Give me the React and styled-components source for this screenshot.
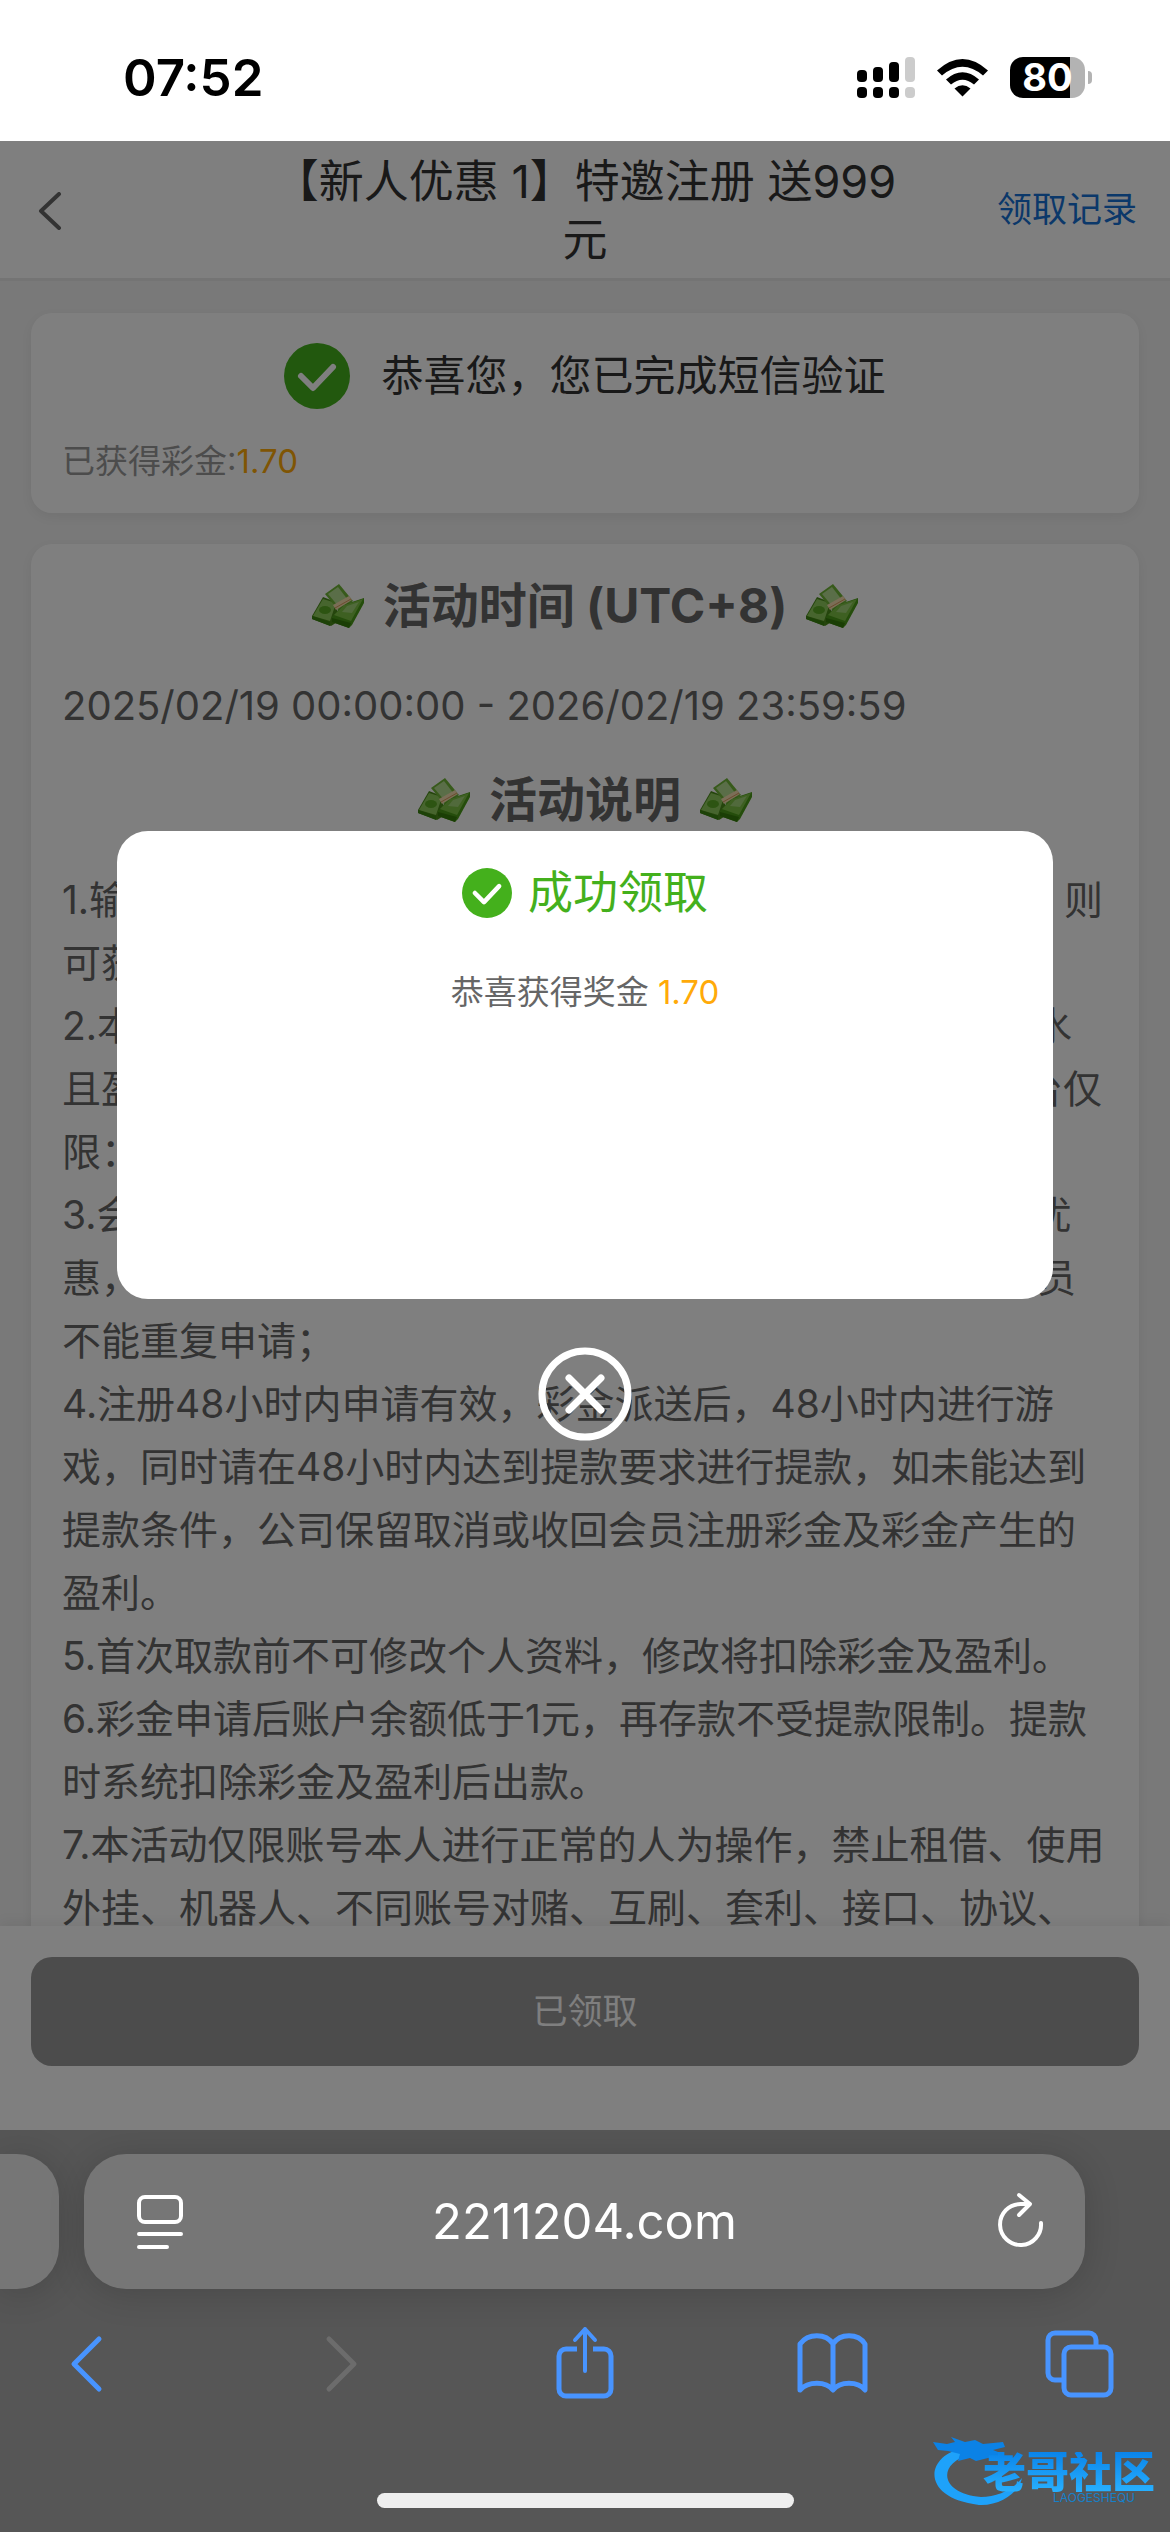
import React from 'react'
import styled, { createGlobalStyle } from 'styled-components'

const GlobalStyle = createGlobalStyle`
    *, *::before, *::after {
        box-sizing: border-box;
    }
    html, body, #root {
        height: 100%;
    }
    body {
        margin: 0;
        font-family: Inter, "Noto Sans CJK SC", sans-serif;
        color: #333;
    }
    h1, h2, p, ol {
        margin: 0;
        padding: 0;
        font-weight: 400;
    }
    button {
        border: 0;
        padding: 0;
        background: none;
        font-family: inherit;
        cursor: pointer;
    }
    svg {
        display: block;
        flex: none;
    }
`
const Screen = styled.div`
    position: relative;
    display: flex;
    flex-direction: column;
    min-height: 100%;
    overflow: hidden;
`

/* status bar */
const StatusBar = styled.header`
    display: flex;
    align-items: center;
    justify-content: space-between;
    padding: 50px 78px 36px 123px;
    background: #fff;
    color: #000;
`
const Clock = styled.time`
    font-size: 51px;
    line-height: 55px;
    font-weight: 600;
`
const StatusIcons = styled.div`
    display: flex;
    align-items: center;
    gap: 22px;
`
const Battery = styled.div`
    display: flex;
    align-items: center;
    gap: 3px;
`
const BatteryBody = styled.div`
    width: 75px;
    border-radius: 13px;
    background: linear-gradient(90deg, #000 80%, #b3b3b3 80%);
    color: #fff;
    font-size: 38px;
    line-height: 41px;
    font-weight: 700;
    text-align: center;
`
const BatteryTip = styled.div`
    width: 4px;
    height: 13px;
    border-radius: 0 4px 4px 0;
    background: #b3b3b3;
`

/* web page */
const WebPage = styled.main`
    position: relative;
    flex: 1 1 0;
    min-height: 0;
    display: flex;
    flex-direction: column;
    background: #f2f2f2;
    overflow: hidden;
`
const NavBar = styled.nav`
    display: grid;
    grid-template-columns: 1fr 58% 1fr;
    align-items: center;
    padding: 12px 33px 9px;
    border-bottom: 3px solid #e8e8e8;
    background: #fff;
`
const BackButton = styled.button`
    justify-self: start;
    color: #666;
    padding: 0 4px;
`
const NavTitle = styled.h1`
    font-size: 45px;
    line-height: 58px;
    text-align: center;
`
const RecordLink = styled.a`
    justify-self: end;
    padding-bottom: 4px;
    font-size: 35px;
    line-height: 44px;
    color: #1670d4;
    text-decoration: none;
    white-space: nowrap;
`
const Scroller = styled.div`
    flex: 1 1 0;
    min-height: 0;
    display: flex;
    flex-direction: column;
    gap: 31px;
    padding: 32px 31px 0;
    overflow: hidden;
`
const Card = styled.section`
    flex: none;
    padding: 30px 31px;
    border-radius: 21px;
    background: #fff;
    box-shadow: 0 4px 12px rgba(0, 0, 0, 0.06);
`
const Verified = styled.div`
    display: flex;
    align-items: center;
    justify-content: center;
    gap: 31px;
    font-size: 42px;
    line-height: 66px;
    margin-bottom: 30px;
`
const Bonus = styled.p`
    font-size: 33px;
    line-height: 44px;
    color: #999;
`
const Amount = styled.span`
    color: #ffaa09;
`
const Heading = styled.h2`
    display: flex;
    align-items: center;
    justify-content: center;
    gap: 18px;
    margin-bottom: 37px;
    font-size: 48px;
    line-height: 63px;
    font-weight: 700;
    color: #666;
`
const Period = styled.p`
    margin-bottom: 31px;
    font-size: 40px;
    line-height: 63px;
    color: #666;
`
const Rules = styled.ol`
    list-style: none;
    font-size: 39px;
    line-height: 63px;
    color: #666;
`
const Footer = styled.footer`
    padding: 31px 31px 64px;
    background: #fff;
    box-shadow: 0 -4px 12px rgba(0, 0, 0, 0.06);
`
const ClaimButton = styled.button`
    display: block;
    width: 100%;
    border-radius: 21px;
    background: #999;
    color: #fff;
    font-size: 35px;
    line-height: 109px;
`

/* dialog over the page */
const Overlay = styled.div`
    position: absolute;
    inset: 0;
    display: flex;
    flex-direction: column;
    align-items: center;
    justify-content: center;
    gap: 48px;
    background: rgba(0, 0, 0, 0.5);
`
const Dialog = styled.div`
    width: 80%;
    min-height: 468px;
    padding: 29px 31px;
    border-radius: 31px;
    background: #fff;
    text-align: center;
`
const DialogTitle = styled.h2`
    display: flex;
    align-items: center;
    justify-content: center;
    gap: 16px;
    margin-bottom: 44px;
    font-size: 45px;
    line-height: 66px;
    color: #44b01c;
`
const DialogText = styled.p`
    font-size: 33px;
    line-height: 44px;
    color: #666;
`

/* browser chrome */
const BrowserBar = styled.footer`
    padding: 24px 0;
    background: #565656;
    color: #fff;
`
const Tabs = styled.div`
    display: flex;
    gap: 25px;
    margin-bottom: 37px;
`
const TabEdge = styled.div`
    width: 59px;
    border-radius: 0 42px 42px 0;
    background: #767676;
    box-shadow: 0 4px 36px rgba(0, 0, 0, 0.16);
`
const AddressBar = styled.div`
    flex: 1;
    display: flex;
    align-items: center;
    justify-content: space-between;
    margin-right: 85px;
    padding: 0 41px;
    border-radius: 42px;
    background: #767676;
    box-shadow: 0 4px 36px rgba(0, 0, 0, 0.16);
    font-size: 49px;
    line-height: 135px;
`
const IconButton = styled.button`
    color: ${({ $color }) => $color || '#4894ff'};
`
const Toolbar = styled.div`
    display: flex;
    align-items: center;
    justify-content: space-between;
    padding: 0 54px 0 50px;
`
const HomeIndicator = styled.div`
    width: 417px;
    height: 15px;
    margin: 93px auto 0;
    border-radius: 8px;
    background: #eee;
`
const Watermark = styled.div`
    position: absolute;
    right: 15px;
    bottom: 26px;
    display: grid;
    grid-template-columns: 50px auto;
    color: #159af5;
`
const DragonLogo = styled.svg`
    overflow: visible;
`
const WatermarkText = styled.div`
    padding-top: 22px;
    text-align: right;
`
const WatermarkName = styled.div`
    font-size: 43px;
    line-height: 40px;
    font-weight: 900;
    background: linear-gradient(#0a84ea, #28b0ff);
    background-clip: text;
    color: transparent;
`
const WatermarkLatin = styled.div`
    font-size: 12px;
    line-height: 12px;
    padding-right: 20px;
    color: #1780c8;
`

const rules = [
    '1.输入邀请码注册会员并完成手机短信验证的新会员用户，则可获得彩金；',
    '2.本活动所获得的彩金只需要完成平台相应的有效投注流水且盈利达到100元后即可申请提款，本优惠可参与游戏平台仅限：电子游戏；',
    '3.会员只能享受一次本活动，每位新注册的会员可以申请优惠，同一姓名、同一手机号码、同一网络地址的已注册会员不能重复申请；',
    '4.注册48小时内申请有效，彩金派送后，48小时内进行游戏，同时请在48小时内达到提款要求进行提款，如未能达到提款条件，公司保留取消或收回会员注册彩金及彩金产生的盈利。',
    '5.首次取款前不可修改个人资料，修改将扣除彩金及盈利。',
    '6.彩金申请后账户余额低于1元，再存款不受提款限制。提款时系统扣除彩金及盈利后出款。',
    '7.本活动仅限账号本人进行正常的人为操作，禁止租借、使用外挂、机器人、不同账号对赌、互刷、套利、接口、协议、'
]

const CheckCircle = ({ size }) => (
    <svg width={size} height={size} viewBox="0 0 66 66" fill="none">
        <circle cx="33" cy="33" r="33" fill="#44b01c" />
        <path d="M17 33l12 12 20-21" stroke="#fff" strokeWidth="6" strokeLinecap="round" strokeLinejoin="round" />
    </svg>
)

const Money = () => (
    <svg width="54" height="46" viewBox="0 0 54 46">
        <path d="M1 33L12 14 25 19 28 38 20 43 1 36z" fill="#4a8a1a" />
        <path d="M2 33L12 16 25 20 19 38z" fill="#8fcb5c" />
        <ellipse cx="14" cy="27" rx="6" ry="4" fill="#5aa824" />
        <path d="M1 33l18 6v4L1 36z" fill="#3a8410" />
        <path d="M14 11L28 1 42 18 28 28z" fill="#6fb436" />
        <path d="M17 11L27 4l10 13-9 7z" fill="#b4dc90" />
        <path d="M21 34L32 22 53 15 53 20 41 42 38 45 21 39z" fill="#4a9a18" />
        <path d="M23 32L33 22 52 16 40 38z" fill="#7cc044" />
        <path d="M31 29l5-6 12-4-7 11z" fill="#a2d478" />
        <path d="M21 35l19 5-2 5-17-6z" fill="#357c0a" />
        <path d="M22 22L38 13l3 4-16 10z" fill="#f6dcae" />
        <path d="M24 25l16-9" stroke="#d8985c" strokeWidth="1" />
    </svg>
)

const Signal = () => (
    <svg width="58" height="41" viewBox="0 0 58 41">
        {[13, 10, 5, 0].map((top, i) => (
            <g key={top} fill={i === 3 ? '#ccc' : '#000'}>
                <rect x={i * 16} y={top} width="10" height={25 - top} rx="4" />
                <rect x={i * 16} y="30" width="10" height="11" rx="4" />
            </g>
        ))}
    </svg>
)

const Wifi = () => (
    <svg width="51" height="38" viewBox="0 0 51 38">
        <path d="M0 11.500Q25.500-11.500 51 11.500L46 16.500Q25.500-1 5 16.500z" />
        <path d="M9 20.500Q25.500 6 42 20.500L37 25.500Q25.500 16 14 25.500z" />
        <path d="M17.500 29.500Q25.500 23 33.500 29.500L25.500 37.500z" />
    </svg>
)

const ToolIcon = ({ children }) => (
    <svg width="72" height="74" viewBox="0 0 72 74" fill="none" stroke="currentColor" strokeWidth="5" strokeLinejoin="round">
        {children}
    </svg>
)

const App = () => {
    return <>
        <GlobalStyle />
        <Screen>
            <StatusBar>
                <Clock>07:52</Clock>
                <StatusIcons>
                    <Signal />
                    <Wifi />
                    <Battery>
                        <BatteryBody>80</BatteryBody>
                        <BatteryTip />
                    </Battery>
                </StatusIcons>
            </StatusBar>

            <WebPage>
                <NavBar>
                    <BackButton aria-label="返回">
                        <svg width="25" height="38" viewBox="0 0 25 38" fill="none" stroke="currentColor" strokeWidth="4" strokeLinecap="round" strokeLinejoin="round">
                            <path d="M22 2L4 19l18 17" />
                        </svg>
                    </BackButton>
                    <NavTitle>【新人优惠 1】特邀注册 送999元</NavTitle>
                    <RecordLink href="#records">领取记录</RecordLink>
                </NavBar>
                <Scroller>
                    <Card>
                        <Verified><CheckCircle size={66} />恭喜您，您已完成短信验证</Verified>
                        <Bonus>已获得彩金:<Amount>1.70</Amount></Bonus>
                    </Card>
                    <Card>
                        <Heading><Money />活动时间 (UTC+8)<Money /></Heading>
                        <Period>2025/02/19 00:00:00 - 2026/02/19 23:59:59</Period>
                        <Heading><Money />活动说明<Money /></Heading>
                        <Rules>
                            {rules.map(rule => <li key={rule}>{rule}</li>)}
                        </Rules>
                    </Card>
                </Scroller>
                <Footer>
                    <ClaimButton>已领取</ClaimButton>
                </Footer>
                <Overlay>
                    <Dialog role="dialog" aria-label="成功领取">
                        <DialogTitle><CheckCircle size={50} />成功领取</DialogTitle>
                        <DialogText>恭喜获得奖金 <Amount>1.70</Amount></DialogText>
                    </Dialog>
                    <IconButton $color="#fff" aria-label="关闭">
                        <svg width="94" height="94" viewBox="0 0 94 94" fill="none" stroke="currentColor" strokeWidth="7" strokeLinecap="round">
                            <circle cx="47" cy="47" r="43" />
                            <path d="M31 31l32 32M63 31L31 63" />
                        </svg>
                    </IconButton>
                </Overlay>
            </WebPage>

            <BrowserBar>
                <Tabs>
                    <TabEdge />
                    <AddressBar>
                        <IconButton $color="#fff" aria-label="页面设置">
                            <svg width="60" height="60" viewBox="0 0 60 60" fill="none" stroke="currentColor" strokeWidth="4" strokeLinecap="round">
                                <rect x="14" y="5" width="42" height="25" rx="6" />
                                <path d="M14 42h42M14 55h28" />
                            </svg>
                        </IconButton>
                        <span>2211204.com</span>
                        <IconButton $color="#fff" aria-label="刷新">
                            <svg width="60" height="60" viewBox="0 0 60 60" fill="none" stroke="currentColor" strokeWidth="4" strokeLinecap="round" strokeLinejoin="round">
                                <path d="M57 31a20.500 20.500 0 1 1-20.500-19h9" />
                                <path d="M35 3l11 9-11 11" />
                            </svg>
                        </IconButton>
                    </AddressBar>
                </Tabs>
                <Toolbar>
                    <IconButton aria-label="后退">
                        <ToolIcon><path d="M49 13L24 38l25 25" strokeLinecap="round" /></ToolIcon>
                    </IconButton>
                    <IconButton $color="#6c6c6c" aria-label="前进">
                        <ToolIcon><path d="M30 13l25 25-25 25" strokeLinecap="round" /></ToolIcon>
                    </IconButton>
                    <IconButton aria-label="分享">
                        <ToolIcon>
                            <path d="M30 23H19a7 7 0 0 0-7 7v33a7 7 0 0 0 7 7h38a7 7 0 0 0 7-7V30a7 7 0 0 0-7-7H46" />
                            <path d="M38 45V3M28 14L38 3l10 11" strokeWidth="4" strokeLinecap="round" />
                        </ToolIcon>
                    </IconButton>
                    <IconButton aria-label="书签">
                        <ToolIcon>
                            <path d="M37 18C30 7 12 7 4 18V64C12 55 30 55 37 64 44 55 62 55 69 64V18C62 7 44 7 37 18V64" />
                        </ToolIcon>
                    </IconButton>
                    <IconButton aria-label="标签页">
                        <ToolIcon>
                            <rect x="20" y="21" width="47" height="48" rx="7" />
                            <path d="M20 54H11a7 7 0 0 1-7-7V14a7 7 0 0 1 7-7h34a7 7 0 0 1 7 7v7" />
                        </ToolIcon>
                    </IconButton>
                </Toolbar>
                <HomeIndicator />
            </BrowserBar>

            <Watermark>
                <DragonLogo width="42" height="76" viewBox="0 0 42 76">
                    <path d="M32 18C-8 24-14 68 46 75 68 76 86 62 89 48 80 60 64 67 48 67 8 64 2 34 38 24z" fill="#1ea2fa" />
                    <path d="M0 12l14 2 8-2-4-5 14 5 10-2 8 4 20-2 2 5-12 3 10 4-1 3-14 1-12 3-6-3-12 3 2-7-12-3-10-1z" fill="#0b82e6" />
                </DragonLogo>
                <WatermarkText>
                    <WatermarkName>老哥社区</WatermarkName>
                    <WatermarkLatin>LAOGESHEQU</WatermarkLatin>
                </WatermarkText>
            </Watermark>
        </Screen>
    </>
}

export default App
